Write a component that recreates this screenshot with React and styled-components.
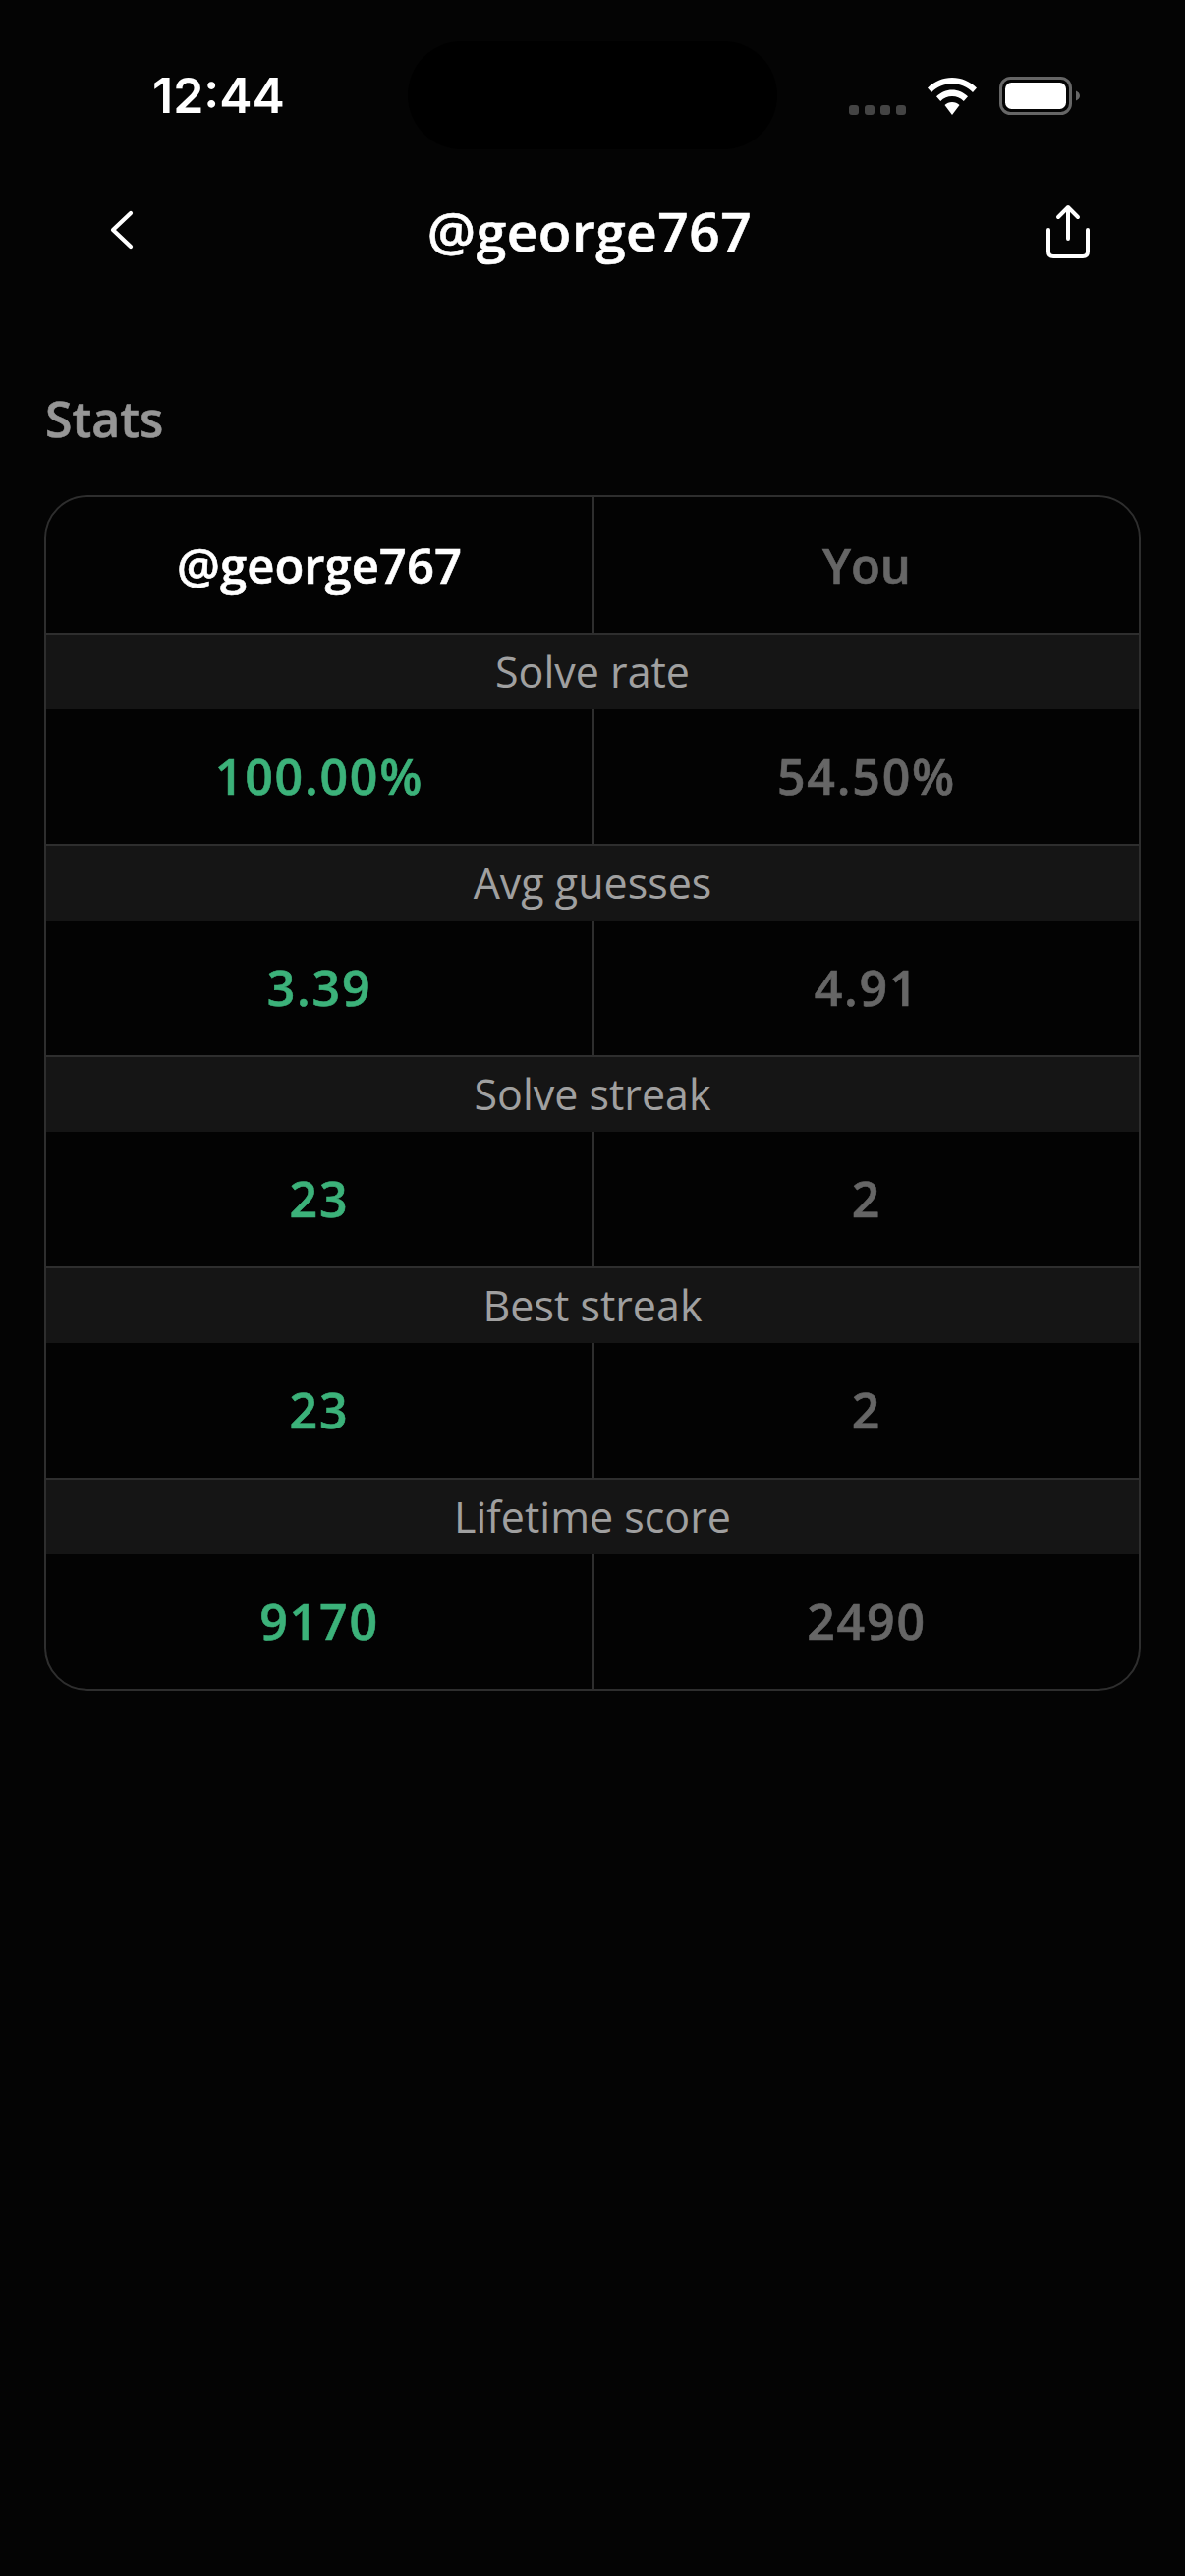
import styled, { createGlobalStyle } from "styled-components"

const GlobalStyle = createGlobalStyle`
  html, body {
    margin: 0;
    padding: 0;
    background: #040404;
  }
`

const Page = styled.div`
  width: 1206px;
  height: 2622px;
  background: #040404;
  font-family: "Open Sans", "Liberation Sans", sans-serif;
  overflow: hidden;
`

const StatusBar = styled.div`
  display: grid;
  grid-template-columns: 415px 376px 1fr;
  height: 110px;
  padding-top: 42px;
`
const Time = styled.div`
  padding: 34px 0 0 155px;
  color: #fff;
  font-family: Inter, sans-serif;
  font-size: 50px;
  line-height: 42px;
  font-weight: 600;
`
const Island = styled.div`
  background: #000;
  border-radius: 55px;
`
const StatusIcons = styled.div`
  display: flex;
  align-items: flex-start;
  padding: 36px 0 0 73px;
`
const Dots = styled.div`
  display: flex;
  gap: 6px;
  margin-top: 29px;
  margin-right: 21px;
`
const Dot = styled.span`
  width: 10px;
  height: 10px;
  border-radius: 3px;
  background: #444;
`
const Wifi = styled.svg`
  width: 52px;
  height: 38px;
  margin-top: 1px;
  margin-right: 22px;
`
const Battery = styled.svg`
  width: 82px;
  height: 39px;
`

const Nav = styled.div`
  display: flex;
  align-items: center;
  justify-content: space-between;
  height: 76px;
  margin-top: 44px;
  padding: 0 96px 0 112px;
`
const NavTitle = styled.div`
  color: #fff;
  font-size: 55px;
  font-weight: 600;
  letter-spacing: 0.5px;
  -webkit-text-stroke: 0.6px #fff;
`
const Back = styled.svg`
  width: 24px;
  height: 40px;
`
const Share = styled.svg`
  width: 46px;
  height: 56px;
  margin-top: 4px;
`

const SectionTitle = styled.h2`
  margin: 126px 0 0;
  padding: 0 46px;
  color: #969696;
  font-size: 50px;
  line-height: 56px;
  font-weight: 600;
  -webkit-text-stroke: 0.6px #969696;
`

const Card = styled.div`
  margin: 50px 45px 0;
  border: 2px solid #2e2e2e;
  border-radius: 44px;
  background: #030303;
  overflow: hidden;
`
const Row = styled.div`
  display: grid;
  grid-template-columns: 1fr 1fr;
  height: ${(p) => (p.$head ? "138px" : "137px")};
`
const Cell = styled.div`
  display: flex;
  align-items: center;
  justify-content: center;
  padding-bottom: ${(p) => (p.$head ? "0" : "2px")};
  font-size: ${(p) => (p.$head ? "49px" : "50px")};
  font-weight: 600;
  letter-spacing: ${(p) => (p.$head ? "0" : "1.8px")};
  color: ${(p) => p.$color};
  -webkit-text-stroke: 0.6px ${(p) => p.$color};
  & + & {
    border-left: 2px solid #2e2e2e;
  }
`
const Label = styled.div`
  height: 76px;
  border-top: 2px solid #2e2e2e;
  background: #151515;
  color: #a0a0a0;
  font-size: 43px;
  line-height: 76px;
  font-weight: 400;
  text-align: center;
`

const stats = [
  { label: "Solve rate", them: "100.00%", you: "54.50%" },
  { label: "Avg guesses", them: "3.39", you: "4.91" },
  { label: "Solve streak", them: "23", you: "2" },
  { label: "Best streak", them: "23", you: "2" },
  { label: "Lifetime score", them: "9170", you: "2490" },
]

const App = () => {
  return (
    <Page>
      <GlobalStyle />
      <StatusBar>
        <Time>12:44</Time>
        <Island />
        <StatusIcons>
          <Dots>
            <Dot />
            <Dot />
            <Dot />
            <Dot />
          </Dots>
          <Wifi viewBox="0 0 50 38">
            <path d="M25 0C15.500 0 7 3.700 0 10.500L4 15C9.500 9.500 17 6.300 25 6.300S40.500 9.500 46 15L50 10.500C43 3.700 34.500 0 25 0Z" fill="#fff" />
            <path d="M25 12.500C19 12.500 13.500 15 9 19.300L13.200 24C16.500 20.800 20.500 19 25 19S33.500 20.800 36.800 24L41 19.300C36.500 15 31 12.500 25 12.500Z" fill="#fff" />
            <path d="M25 25C22 25 19.500 26 17.500 28L25 38L32.500 28C30.500 26 28 25 25 25Z" fill="#fff" />
          </Wifi>
          <Battery viewBox="0 0 82 39">
            <rect x="1.500" y="1.500" width="71" height="36" rx="10" fill="none" stroke="#666" strokeWidth="3" />
            <rect x="6" y="6" width="62" height="27" rx="6.500" fill="#fff" />
            <path d="M78 14.500C80.500 15.500 82 17.300 82 19.500S80.500 23.500 78 24.500Z" fill="#666" />
          </Battery>
        </StatusIcons>
      </StatusBar>
      <Nav>
        <Back viewBox="0 0 24 40" fill="none" stroke="#fff" strokeWidth="4.200" strokeLinecap="round" strokeLinejoin="round">
          <path d="M21 3L3 20L21 37" />
        </Back>
        <NavTitle>@george767</NavTitle>
        <Share viewBox="0 0 46 56" fill="none" stroke="#fff" strokeWidth="4" strokeLinecap="round" strokeLinejoin="round">
          <path d="M23 35V3M13 13L23 3L33 13" />
          <path d="M3 26V48Q3 53 8 53H38Q43 53 43 48V26" />
        </Share>
      </Nav>
      <SectionTitle>Stats</SectionTitle>
      <Card>
        <Row $head>
          <Cell $head $color="#fff">@george767</Cell>
          <Cell $head $color="#666">You</Cell>
        </Row>
        {stats.map((s) => (
          <div key={s.label}>
            <Label>{s.label}</Label>
            <Row>
              <Cell $color="#3cb27a">{s.them}</Cell>
              <Cell $color="#666">{s.you}</Cell>
            </Row>
          </div>
        ))}
      </Card>
    </Page>
  )
}

export default App
